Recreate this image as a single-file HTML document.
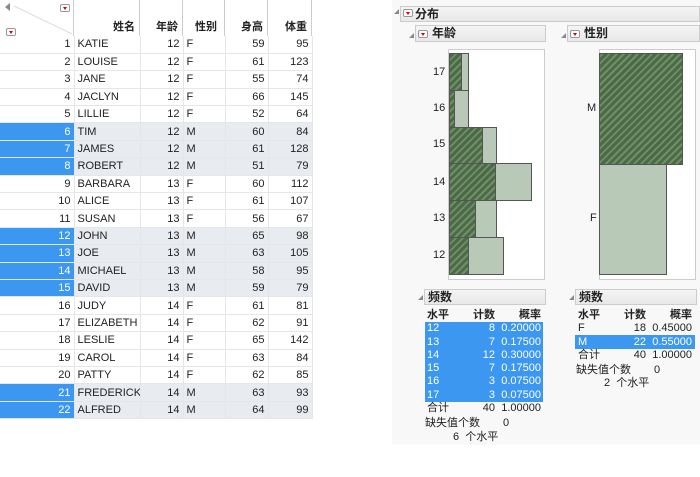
<!DOCTYPE html>
<html><head><meta charset="utf-8"><style>
*{margin:0;padding:0;box-sizing:border-box}
body{width:700px;height:477px;background:#fff;position:relative;overflow:hidden;font-family:"Liberation Sans","Noto Sans CJK SC",sans-serif;font-size:11px;color:#222}
.a{position:absolute}
table{border-collapse:collapse;position:absolute;left:0;top:36px;table-layout:fixed;width:312px}
td{height:17.4px;border-bottom:1px solid #e4e6ea;border-right:1px solid #e4e6ea;padding:0 3px;white-space:nowrap;line-height:16px;overflow:hidden}
.hd{position:absolute;top:0;height:36px;border-right:1px solid #ccc;font-weight:bold;font-size:11px;text-align:right;padding:18px 4px 0 0;background:#fff}
.tri{display:inline-block;width:10px;height:8px;border:1px solid #999;border-radius:2px;background:#fff;position:relative}
.tri:after{content:"";position:absolute;left:2px;top:2px;border-left:2.5px solid transparent;border-right:2.5px solid transparent;border-top:3px solid #d00}
.ph{position:absolute;background:linear-gradient(#f4f4f4,#e8e8e8);border:1px solid #ccc;font-weight:bold;font-size:12px;padding-left:14px;line-height:15px}
.hatch{background:repeating-linear-gradient(-45deg,#4c6a47 0 3px,#6f8f67 3px 5px);border:1px solid #555}
.lt{background:#b9c9b8;border:1px solid #555}
.ft{position:absolute;font-size:11px;line-height:13.3px}
.ft div{height:13.3px;position:relative}
.ft span{position:absolute}
</style></head><body>
<div class="a" style="left:0;top:0;width:312px;height:36px;border-bottom:1px solid #bbb;border-top:1px solid #bbb"></div>
<div class="a" style="left:0;top:0;width:74px;height:36px;border-right:1px solid #ccc;background:#fff">
<div class="a" style="left:5px;top:3px;width:0;height:0;border-top:4px solid transparent;border-bottom:4px solid transparent;border-right:5px solid #888"></div>
<div class="a" style="left:60px;top:3px"><span class="tri"></span></div>
<div class="a" style="left:6px;top:27px"><span class="tri"></span></div>
<svg class="a" style="left:0;top:0" width="74" height="36"><line x1="14" y1="6" x2="72" y2="34" stroke="#ddd"/></svg>
</div>
<div class="hd" style="left:74px;width:66px">姓名</div>
<div class="hd" style="left:140px;width:43px">年龄</div>
<div class="hd" style="left:183px;width:42px;text-align:left;padding-left:12px">性别</div>
<div class="hd" style="left:225px;width:43px">身高</div>
<div class="hd" style="left:268px;width:44px">体重</div>
<table id="t"><colgroup><col style="width:74px"><col style="width:66px"><col style="width:43px"><col style="width:42px"><col style="width:43px"><col style="width:44px"></colgroup><tbody id="tb"></tbody></table>
<script>
var d=[["KATIE",12,"F",59,95],["LOUISE",12,"F",61,123],["JANE",12,"F",55,74],["JACLYN",12,"F",66,145],["LILLIE",12,"F",52,64],["TIM",12,"M",60,84],["JAMES",12,"M",61,128],["ROBERT",12,"M",51,79],["BARBARA",13,"F",60,112],["ALICE",13,"F",61,107],["SUSAN",13,"F",56,67],["JOHN",13,"M",65,98],["JOE",13,"M",63,105],["MICHAEL",13,"M",58,95],["DAVID",13,"M",59,79],["JUDY",14,"F",61,81],["ELIZABETH",14,"F",62,91],["LESLIE",14,"F",65,142],["CAROL",14,"F",63,84],["PATTY",14,"F",62,85],["FREDERICK",14,"M",63,93],["ALFRED",14,"M",64,99]];
var h="";d.forEach(function(r,i){var s=r[2]=="M";var bg=s?"#e8ebf0":"#fff";
h+='<tr style="background:'+bg+'"><td style="text-align:right;'+(s?'background:#3b97f0;color:#fff':'background:#fff')+'">'+(i+1)+'</td><td>'+r[0]+'</td><td style="text-align:right">'+r[1]+'</td><td>'+r[2]+'</td><td style="text-align:right">'+r[3]+'</td><td style="text-align:right">'+r[4]+'</td></tr>';});
document.getElementById("tb").innerHTML=h;
</script>
<div class="a" style="left:392px;top:0;width:308px;height:445px;background:#f8f8f8"></div>
<div class="a" style="left:394px;top:9px;border-left:5px solid transparent;border-bottom:5px solid #888;width:0"></div>
<div class="ph" style="left:400px;top:6px;width:300px;height:16px">分布</div>
<div class="a" style="left:403px;top:8px"><span class="tri"></span></div>
<div class="a" style="left:409px;top:33px;border-left:5px solid transparent;border-bottom:5px solid #888;width:0"></div>
<div class="ph" style="left:415px;top:25px;width:131px;height:17px;padding-left:16px">年龄</div>
<div class="a" style="left:418px;top:29px"><span class="tri"></span></div>
<div class="a" style="left:561px;top:33px;border-left:5px solid transparent;border-bottom:5px solid #888;width:0"></div>
<div class="ph" style="left:567px;top:25px;width:133px;height:17px;padding-left:16px">性别</div>
<div class="a" style="left:570px;top:29px"><span class="tri"></span></div>
<div class="a" style="left:448px;top:49px;width:97px;height:231px;background:#fff;border:1px solid #ccc"></div>
<div class="a lt" style="left:449px;top:237px;width:55px;height:38px"></div><div class="a hatch" style="left:449px;top:237px;width:20px;height:38px"></div>
<div class="a lt" style="left:449px;top:200px;width:48px;height:38px"></div><div class="a hatch" style="left:449px;top:200px;width:27px;height:38px"></div>
<div class="a lt" style="left:449px;top:163px;width:83px;height:38px"></div><div class="a hatch" style="left:449px;top:163px;width:47px;height:38px"></div>
<div class="a lt" style="left:449px;top:127px;width:48px;height:37px"></div><div class="a hatch" style="left:449px;top:127px;width:34px;height:37px"></div>
<div class="a lt" style="left:449px;top:90px;width:20px;height:38px"></div><div class="a hatch" style="left:449px;top:90px;width:6px;height:38px"></div>
<div class="a lt" style="left:449px;top:53px;width:20px;height:38px"></div><div class="a hatch" style="left:449px;top:53px;width:13px;height:38px"></div>
<div class="a" style="left:433px;top:66px;font-size:11px;line-height:12px">17<br><br><br>16<br><br><br>15</div>
<div class="a" style="left:433px;top:176px;font-size:11px">14</div>
<div class="a" style="left:433px;top:212px;font-size:11px">13</div>
<div class="a" style="left:433px;top:249px;font-size:11px">12</div>
<div class="a" style="left:599px;top:49px;width:97px;height:231px;background:#fff;border:1px solid #ccc"></div>
<div class="a hatch" style="left:599px;top:53px;width:84px;height:112px"></div>
<div class="a lt" style="left:599px;top:164px;width:68px;height:111px"></div>
<div class="a" style="left:587px;top:102px">M</div>
<div class="a" style="left:590px;top:212px">F</div>
<div class="a" style="left:418px;top:295px;border-left:5px solid transparent;border-bottom:5px solid #888;width:0"></div>
<div class="ph" style="left:424px;top:289px;width:122px;height:16px;padding-left:3px">频数</div>
<div class="a" style="left:425px;top:322px;width:118px;height:80px;background:#3b97f0"></div>
<div class="ft" style="left:427px;top:309px;width:116px">
<div style="font-weight:bold"><span style="left:0">水平</span><span style="right:48px">计数</span><span style="right:2px">概率</span></div>
<div style="color:#fff"><span>12</span><span style="right:48px">8</span><span style="right:2px">0.20000</span></div>
<div style="color:#fff"><span>13</span><span style="right:48px">7</span><span style="right:2px">0.17500</span></div>
<div style="color:#fff"><span>14</span><span style="right:48px">12</span><span style="right:2px">0.30000</span></div>
<div style="color:#fff"><span>15</span><span style="right:48px">7</span><span style="right:2px">0.17500</span></div>
<div style="color:#fff"><span>16</span><span style="right:48px">3</span><span style="right:2px">0.07500</span></div>
<div style="color:#fff"><span>17</span><span style="right:48px">3</span><span style="right:2px">0.07500</span></div>
<div><span>合计</span><span style="right:48px">40</span><span style="right:2px">1.00000</span></div>
<div style="margin-top:2px"><span style="left:-2px">缺失值个数</span><span style="left:76px">0</span></div>
<div><span style="left:26px">6&nbsp; 个水平</span></div>
</div>
<div class="a" style="left:569px;top:295px;border-left:5px solid transparent;border-bottom:5px solid #888;width:0"></div>
<div class="ph" style="left:575px;top:289px;width:122px;height:16px;padding-left:3px">频数</div>
<div class="a" style="left:575px;top:335px;width:120px;height:14px;background:#3b97f0"></div>
<div class="ft" style="left:578px;top:309px;width:116px">
<div style="font-weight:bold"><span>水平</span><span style="right:48px">计数</span><span style="right:2px">概率</span></div>
<div><span>F</span><span style="right:48px">18</span><span style="right:2px">0.45000</span></div>
<div style="color:#fff"><span>M</span><span style="right:48px">22</span><span style="right:2px">0.55000</span></div>
<div><span>合计</span><span style="right:48px">40</span><span style="right:2px">1.00000</span></div>
<div style="margin-top:2px"><span style="left:-2px">缺失值个数</span><span style="left:76px">0</span></div>
<div><span style="left:26px">2&nbsp; 个水平</span></div>
</div>
</body></html>
